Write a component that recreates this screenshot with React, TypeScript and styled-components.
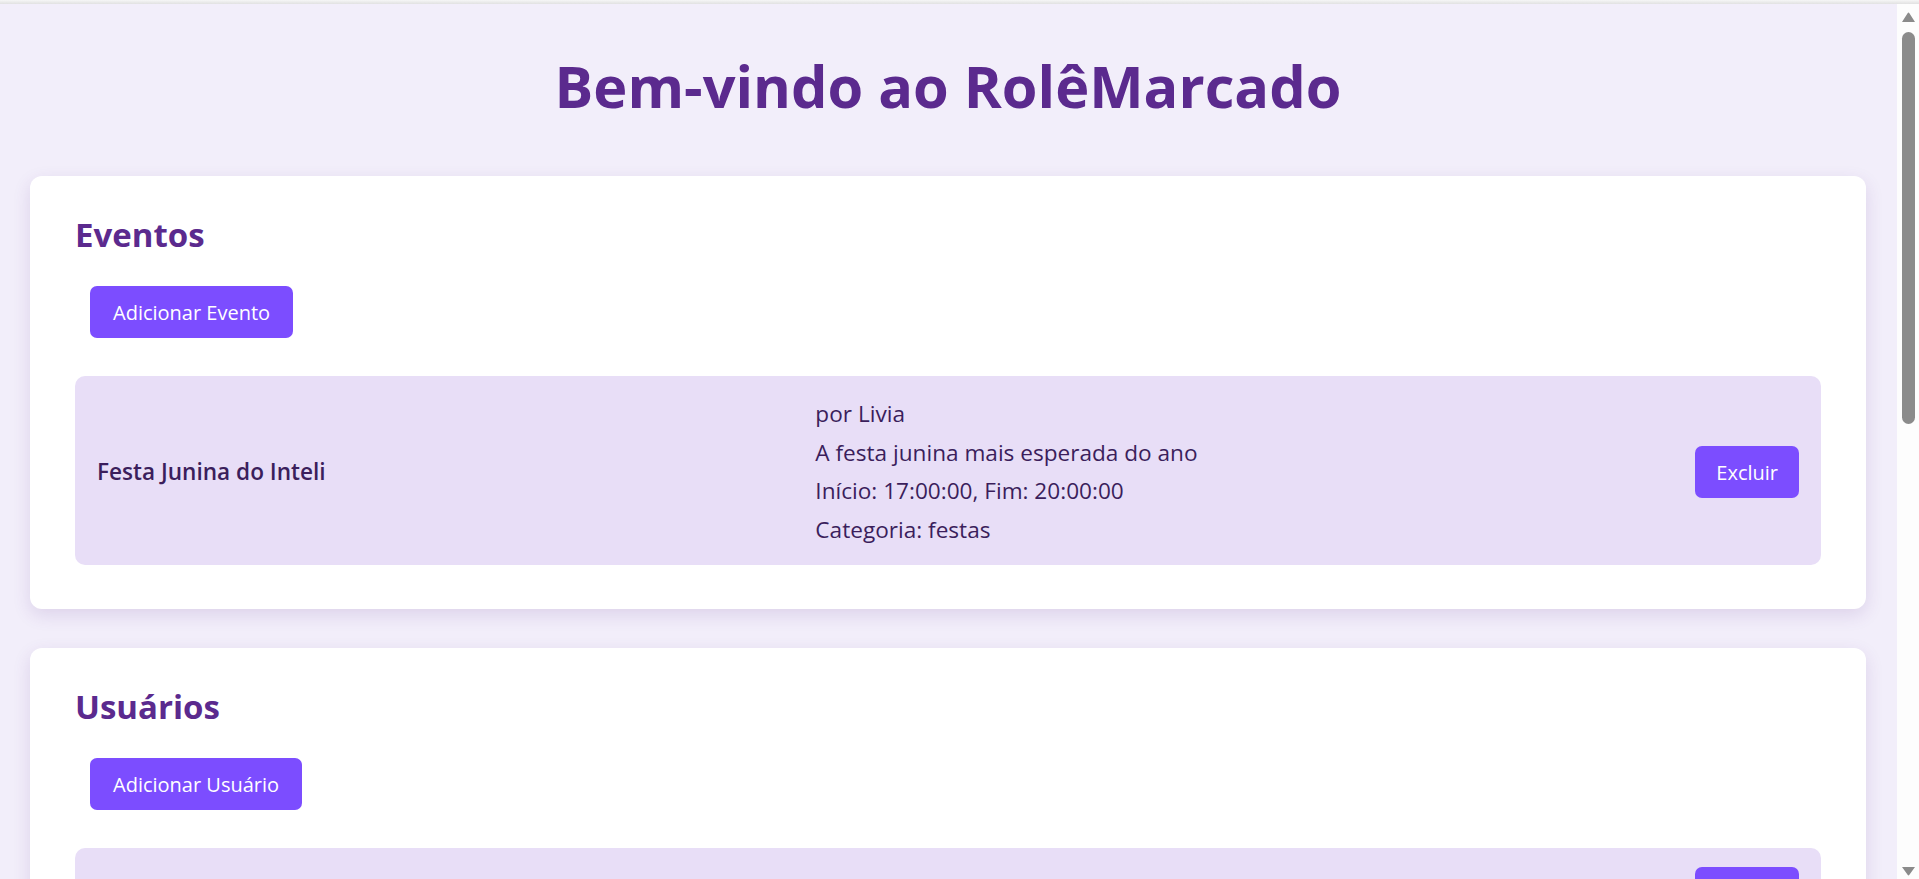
import React from "react";
import styled, { createGlobalStyle } from "styled-components";

const GlobalStyle = createGlobalStyle`
  html {
    background: #f2eefa;
  }
  body {
    margin: 0;
    background: #f2eefa;
    font-family: "Open Sans", "Noto Sans", sans-serif;
    color: #3b1e5c;
  }
`;

const TopEdge = styled.div`
  height: 4px;
  background: linear-gradient(#f6f6f6, #e1e1e1);
`;

const Page = styled.main`
  padding: 0 53px 48px 30px;
`;

const Title = styled.h1`
  margin: 47px 0 56px;
  text-align: center;
  font-size: 57.7px;
  line-height: 69px;
  font-weight: 700;
  color: #5b2a8e;
`;

const Card = styled.section`
  background: #ffffff;
  border-radius: 12px;
  box-shadow: 0 6px 18px rgba(91, 42, 142, 0.14);
  padding: 36px 45px 44px;

  & + & {
    margin-top: 39px;
  }
`;

const SectionTitle = styled.h2`
  margin: 0;
  font-size: 33px;
  line-height: 45px;
  font-weight: 700;
  color: #5b2a8e;
`;

const Button = styled.button`
  font-family: inherit;
  font-size: 20px;
  line-height: 27px;
  padding: 12.5px 21px;
  background: #7c4dff;
  color: #ffffff;
  border: none;
  border-radius: 7px;
  cursor: pointer;
  flex: none;
`;

const AddButton = styled(Button)`
  display: block;
  padding: 12.5px 23px;
  margin: 29px 0 38px 15px;
`;

const List = styled.div`
  display: flex;
  flex-direction: column;
  gap: 15px;
`;

const Item = styled.div`
  display: flex;
  justify-content: space-between;
  align-items: center;
  padding: 19px 22px 16px 22px;
  background: #e8def7;
  border-radius: 10px;
  color: #3b1e5c;
`;

const ItemName = styled.span`
  font-size: 22.6px;
  font-weight: 600;
  line-height: 38.5px;
`;

const Details = styled.div`
  display: flex;
  flex-direction: column;
  margin-right: 8px;
  font-size: 22.6px;
  line-height: 38.5px;
`;

const Line = styled.span`
  display: block;
`;

/* Window scrollbar as seen in the screenshot (drawn over the page's right edge) */
const Scrollbar = styled.div`
  position: fixed;
  top: 4px;
  right: 0;
  bottom: 0;
  width: 22px;
  background: #fdfdfd;
  display: flex;
  flex-direction: column;
  align-items: center;
  padding: 8px 0 3.5px 1px;
  box-sizing: border-box;
`;

const Thumb = styled.div`
  margin-top: 10px;
  width: 13px;
  height: 392px;
  border-radius: 7px;
  background: #8b8b8b;
`;

const DownArrow = styled.svg`
  margin-top: auto;
  display: block;
`;

const UpArrow = styled.svg`
  display: block;
`;

type Evento = {
  nome: string;
  autor: string;
  descricao: string;
  inicio: string;
  fim: string;
  categoria: string;
};

type Usuario = {
  nome: string;
  email: string;
};

const eventos: Evento[] = [
  {
    nome: "Festa Junina do Inteli",
    autor: "Livia",
    descricao: "A festa junina mais esperada do ano",
    inicio: "17:00:00",
    fim: "20:00:00",
    categoria: "festas",
  },
];

const usuarios: Usuario[] = [
  { nome: "Livia", email: "livia@inteli.edu.br" },
  { nome: "Pedro", email: "pedro@inteli.edu.br" },
];

export default function App() {
  return (
    <>
      <GlobalStyle />
      <TopEdge />
      <Page>
        <Title>Bem-vindo ao RolêMarcado</Title>

        <Card>
          <SectionTitle>Eventos</SectionTitle>
          <AddButton>Adicionar Evento</AddButton>
          <List>
            {eventos.map((e) => (
              <Item key={e.nome}>
                <ItemName>{e.nome}</ItemName>
                <Details>
                  <Line>por {e.autor}</Line>
                  <Line>{e.descricao}</Line>
                  <Line>
                    Início: {e.inicio}, Fim: {e.fim}
                  </Line>
                  <Line>Categoria: {e.categoria}</Line>
                </Details>
                <Button>Excluir</Button>
              </Item>
            ))}
          </List>
        </Card>

        <Card>
          <SectionTitle>Usuários</SectionTitle>
          <AddButton>Adicionar Usuário</AddButton>
          <List>
            {usuarios.map((u) => (
              <Item key={u.email}>
                <ItemName>{u.nome}</ItemName>
                <Details>
                  <Line>{u.email}</Line>
                </Details>
                <Button>Excluir</Button>
              </Item>
            ))}
          </List>
        </Card>
      </Page>

      <Scrollbar aria-hidden="true">
        <UpArrow width="13" height="10" viewBox="0 0 13 10">
          <path d="M6.5 0.5 Q7 0.5 7.4 1.2 L13 10 L0 10 L5.6 1.2 Q6 0.5 6.5 0.5 Z" fill="#8b8b8b" />
        </UpArrow>
        <Thumb />
        <DownArrow width="13" height="9" viewBox="0 0 13 9">
          <path d="M0 0 L13 0 L7.4 7.8 Q7 8.5 6.5 8.5 Q6 8.5 5.6 7.8 Z" fill="#8b8b8b" />
        </DownArrow>
      </Scrollbar>
    </>
  );
}
